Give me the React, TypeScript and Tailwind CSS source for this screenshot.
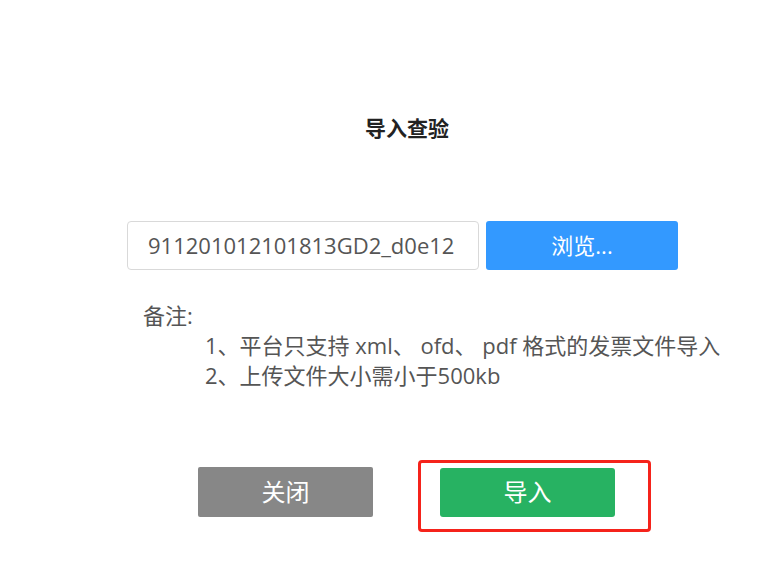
import React from "react";

export default function App() {
  const font = { fontFamily: '"Open Sans", "Noto Sans CJK SC", sans-serif' };
  return (
    <div className="w-[766px] h-[578px] bg-white text-[#333]" style={font}>
      <div className="pt-[113px] flex justify-center pl-[48px]">
        <h1 className="text-[21px] font-bold text-[#222] leading-[30px]">导入查验</h1>
      </div>
      <div className="mt-[78px] pl-[127px] flex items-center gap-[7px]">
        <div className="w-[352px] h-[49px] border border-[#d9d9d9] rounded-[4px] flex items-center pl-[20px] text-[22px] text-[#555] overflow-hidden whitespace-nowrap">
          911201012101813GD2_d0e12
        </div>
        <button className="w-[192px] h-[49px] bg-[#3399ff] rounded-[3px] text-white text-[22px] flex items-center justify-center">
          浏览...
        </button>
      </div>
      <div className="mt-[30px] pl-[143px] text-[22px] text-[#555] leading-[30px]">
        <div>备注:</div>
        <div className="pl-[62px]">
          <div className="whitespace-nowrap">1、平台只支持 xml、 ofd、 pdf 格式的发票文件导入</div>
          <div>2、上传文件大小需小于500kb</div>
        </div>
      </div>
      <div className="mt-[77px] pl-[198px] flex items-center gap-[67px]">
        <button className="w-[175px] h-[50px] bg-[#878787] rounded-[2px] text-white text-[24px] flex items-center justify-center">
          关闭
        </button>
        <div className="relative">
          <button className="w-[175px] h-[49px] bg-[#27b262] rounded-[3px] text-white text-[24px] flex items-center justify-center">
            导入
          </button>
          <div className="absolute left-[-22px] top-[-8px] w-[233px] h-[72px] border-[3px] border-[#f5231b] rounded-[4px] pointer-events-none" />
        </div>
      </div>
    </div>
  );
}
